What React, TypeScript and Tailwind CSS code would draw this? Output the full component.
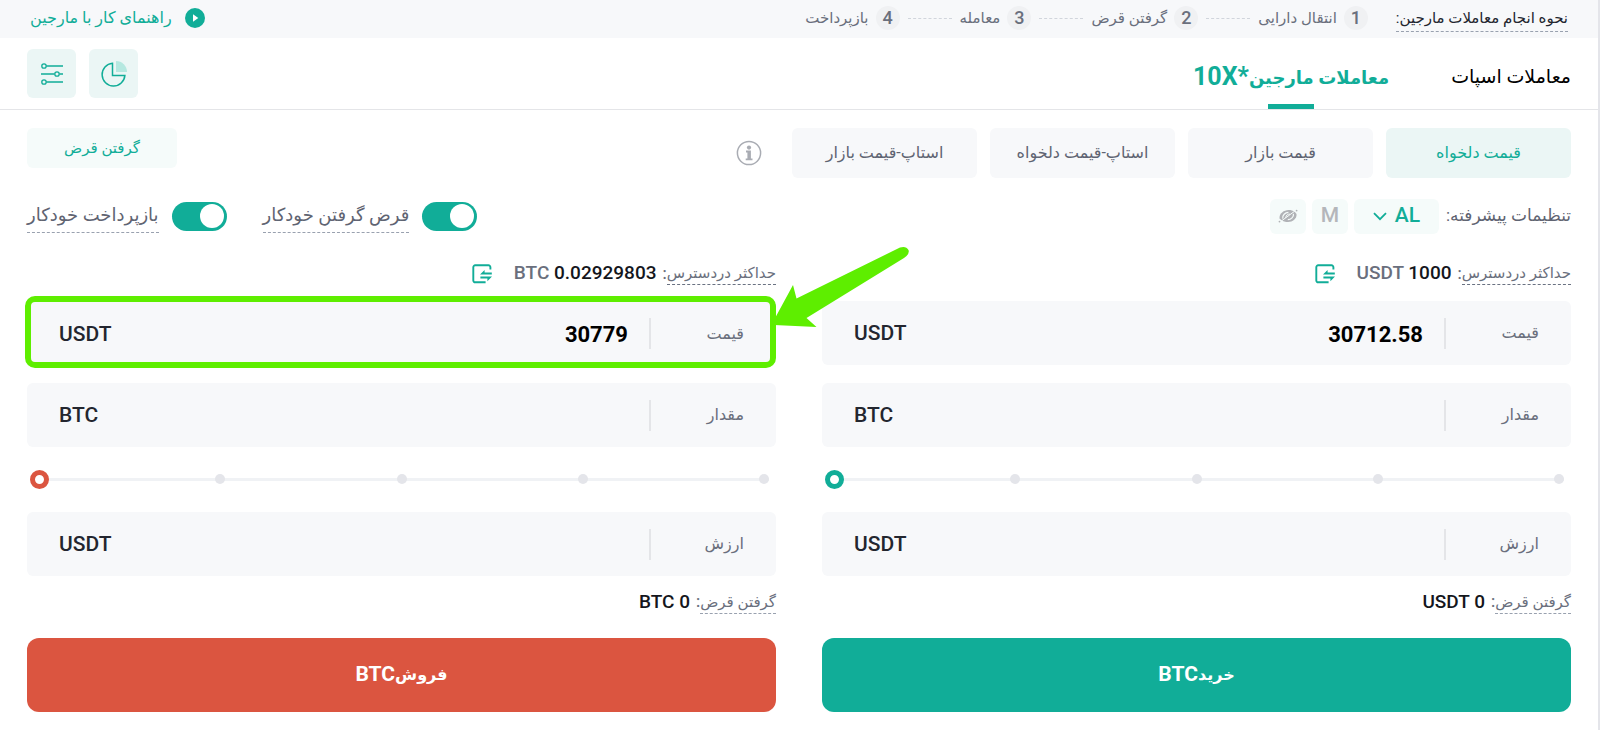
import { Fragment, useId, useState } from "react";
import clsx from "clsx";

const STEPS = ["انتقال دارایی", "گرفتن قرض", "معامله", "بازپرداخت"];
const ORDER_TYPES = ["قیمت دلخواه", "قیمت بازار", "استاپ-قیمت دلخواه", "استاپ-قیمت بازار"];

function PlayIcon() {
  return (
    <svg viewBox="0 0 20 20" className="size-5" aria-hidden="true">
      <circle cx="10" cy="10" r="10" fill="#11ad98" />
      <path d="M8 6.2v7.6l5.300-3.8z" fill="#fff" />
    </svg>
  );
}

function SlidersIcon() {
  return (
    <svg viewBox="0 0 24 24" className="size-6" fill="none" stroke="#11ad98" strokeWidth="1.3" aria-hidden="true">
      <path d="M6.3 4H23M1 12h13.5M19.5 12H23M6.3 20H23" />
      <circle cx="4" cy="4" r="2.2" />
      <circle cx="17" cy="12" r="2.2" />
      <circle cx="4" cy="20" r="2.2" />
    </svg>
  );
}

function PieIcon() {
  return (
    <svg viewBox="0 0 28 28" className="size-7" fill="none" aria-hidden="true">
      <path d="M12.500 3.200A11.400 11.400 0 1 0 24.900 15.400H12.500z" stroke="#11ad98" strokeWidth="1.5" />
      <path d="M16 1v11h11A11 11 0 0 0 16 1z" fill="#b5e8e0" />
    </svg>
  );
}

function TransferIcon() {
  return (
    <svg viewBox="0 0 20 20" className="size-5" fill="none" aria-hidden="true">
      <path
        d="M18.400 5.600V3.200A1.900 1.900 0 0 0 16.500 1.300H3.200A1.900 1.900 0 0 0 1.300 3.200V16.400A1.900 1.900 0 0 0 3.200 18.300H13.600"
        stroke="#11ad98"
        strokeWidth="1.9"
      />
      <path d="M19.800 8.500v2H8l4.600-4.400v2.400zM8.400 12.600h11.600l-4.600 4.600v-2.600H8.400z" fill="#11ad98" />
    </svg>
  );
}

function EyeOffIcon() {
  return (
    <svg viewBox="0 0 20 16" className="h-4 w-5" fill="none" aria-hidden="true">
      <path d="M1.500 10.500C1 5.500 6 2 10.500 2c2.500 0 4.500.6 6 1.600L18.500 6c.6 4.500-4 8-8.500 8-2.500 0-5-.6-6.500-1.800z" fill="#b0b2b6" />
      <path d="M4.800 10.600c-.6-3.400 2.400-6.200 5.600-6.200M15.400 5.800c.6 3.200-2.400 5.800-5.600 5.800" stroke="#f5fbfa" strokeWidth="1.2" />
      <path d="M7.600 9.900C8 7 10 5.800 12 6.200" stroke="#f5fbfa" strokeWidth="1" />
      <path d="M2.600 13.600 18 2.200" stroke="#f5fbfa" strokeWidth="1" />
      <circle cx="1.500" cy="13.600" r=".9" fill="#b0b2b6" />
      <circle cx="18.600" cy="2.600" r=".9" fill="#b0b2b6" />
    </svg>
  );
}

function InfoIcon() {
  return (
    <svg viewBox="0 0 26 26" className="size-[26px]" fill="none" aria-hidden="true">
      <circle cx="13" cy="13" r="11.6" stroke="#a9acb3" strokeWidth="1.5" />
      <circle cx="13" cy="7.600" r="2.1" fill="#a9acb3" />
      <path d="M10 10.600h4.900v7.800h1.600v1.800H9.700v-1.800h1.700v-6H10z" fill="#a9acb3" />
    </svg>
  );
}

function Switch({ label }: { label: string }) {
  const id = useId();
  return (
    <div className="flex items-center gap-[13px]">
      <input
        id={id}
        type="checkbox"
        role="switch"
        defaultChecked
        className="flex h-[29px] w-[55px] shrink-0 cursor-pointer appearance-none items-center justify-start rounded-full bg-gray-300 p-[3px] before:size-6 before:rounded-full before:bg-white checked:justify-end checked:bg-[#11ad98]"
        dir="ltr"
      />
      <label htmlFor={id} className="border-b border-dashed border-gray-400 pt-[2px] pb-[3px] text-lg leading-7 text-[#5f6472]">
        {label}
      </label>
    </div>
  );
}

type FieldProps = { label: string; unit: string; value?: string; marked?: boolean };

function Field({ label, unit, value = "", marked }: FieldProps) {
  const id = useId();
  const [text, setText] = useState(value);
  return (
    <div className={clsx("relative flex h-16 items-center rounded-md bg-[#f7f8fa] px-8", marked && "border-t border-[#11ad98]")}>
      <label htmlFor={id} className="w-[93px] text-base text-[#6a6f7d]">
        {label}
      </label>
      <span className="h-[31px] w-[2px] bg-[#e4e5e8]" />
      <input
        id={id}
        dir="ltr"
        value={text}
        onChange={(e) => setText(e.target.value)}
        className="mx-[21px] min-w-0 flex-1 bg-transparent pt-[2px] text-right text-[22px] font-bold text-black outline-none"
      />
      <span className="pt-[2px] text-[21px] font-medium text-[#23262f]">{unit}</span>
      {marked && (
        <>
          <span className="pointer-events-none absolute -top-[6px] right-0 -bottom-[3px] -left-[2px] rounded-[10px] border-[6px] border-[#5eee00]" />
          <svg
            viewBox="0 0 136 82"
            className="pointer-events-none absolute -top-[56px] left-full z-10 -ml-[3px] h-[82px] w-[136px]"
            fill="#5eee00"
            aria-hidden="true"
          >
            <path d="M1 74 20 39 23.500 52.500 127 1.500Q133-.5 135.500 4Q137 8 131 12L33.500 72 43.500 81 1 79Z" />
          </svg>
        </>
      )}
    </div>
  );
}

function AmountSlider({ tone, label }: { tone: "buy" | "sell"; label: string }) {
  return (
    <div dir="ltr" className="mx-[3px] grid h-[65px] items-center pb-px">
      <div className="col-start-1 row-start-1 mx-1 flex items-center">
        <span className="h-[3px] flex-1 bg-[#f0f2f5]" />
      </div>
      <div className="col-start-1 row-start-1 mx-1 flex justify-between">
        {[0, 25, 50, 75, 100].map((stop) => (
          <span key={stop} className="size-[10px] rounded-full bg-[#e4e5ea]" />
        ))}
      </div>
      <input
        type="range"
        min={0}
        max={100}
        defaultValue={0}
        aria-label={label}
        className={clsx(
          "z-10 col-start-1 row-start-1 h-5 w-full cursor-pointer appearance-none bg-transparent [&::-webkit-slider-thumb]:size-[19px] [&::-webkit-slider-thumb]:appearance-none [&::-webkit-slider-thumb]:rounded-full [&::-webkit-slider-thumb]:border-[5px] [&::-webkit-slider-thumb]:border-solid [&::-webkit-slider-thumb]:bg-white",
          tone === "buy"
            ? "[&::-webkit-slider-thumb]:border-[#11ad98]"
            : "[&::-webkit-slider-thumb]:border-[#db5540]",
        )}
      />
    </div>
  );
}

type SideProps = {
  tone: "buy" | "sell";
  action: string;
  available: string;
  availableUnit: string;
  price: string;
  loanUnit: string;
  marked?: boolean;
};

function OrderForm({ tone, action, available, availableUnit, price, loanUnit, marked }: SideProps) {
  return (
    <form className="min-w-0 flex-1" onSubmit={(e) => e.preventDefault()}>
      <div className="flex h-[52px] items-center pb-[3px] text-[19px] font-medium">
        <span className="border-b border-dashed border-gray-500 text-[15px] leading-[22px] font-normal text-[#6a6f7d]">
          حداکثر دردسترس
        </span>
        <span className="me-[6px] text-base text-[#6a6f7d]">:</span>
        <bdi dir="ltr" className="text-[#14161c]">
          <span className="text-[#6a6f7d]">{availableUnit}</span> {available}
        </bdi>
        <button type="button" aria-label="انتقال" className="ms-[22px] cursor-pointer">
          <TransferIcon />
        </button>
      </div>
      <div className="flex flex-col gap-[18px]">
        <Field label="قیمت" unit="USDT" value={price} marked={marked} />
        <Field label="مقدار" unit="BTC" />
      </div>
      <AmountSlider tone={tone} label={action} />
      <Field label="ارزش" unit="USDT" />
      <div className="flex h-[62px] items-center pb-[10px] text-[19px] font-medium">
        <span className="border-b border-dashed border-gray-400 text-[15px] leading-[22px] font-normal text-[#6a6f7d]">
          گرفتن قرض
        </span>
        <span className="me-[6px] text-base text-[#6a6f7d]">:</span>
        <bdi dir="ltr" className="text-[#14161c]">
          {loanUnit} 0
        </bdi>
      </div>
      <button
        type="submit"
        className={clsx(
          "flex h-[74px] w-full cursor-pointer items-center justify-center rounded-xl font-bold text-white",
          tone === "buy" ? "bg-[#11ad98]" : "bg-[#db5540]",
        )}
      >
        <span className="text-base">{action}</span>
        <span className="text-[21px]">BTC</span>
      </button>
    </form>
  );
}

export default function App() {
  const [type, setType] = useState(0);
  return (
    <div
      dir="rtl"
      className="flex min-h-screen flex-col bg-white font-['Roboto','DejaVu_Sans',sans-serif] font-normal"
    >
      <div className="w-full flex-1 border-r-2 border-[#e4e5ea]">
        <div className="flex h-[38px] items-center bg-[#f7f8fa] px-[30px] pb-[2px] text-[15px] text-[#6a6f7d]">
          <span className="me-[28px] border-b border-dashed border-gray-400 leading-[26px] text-[#23262f]">
            نحوه انجام معاملات مارجین:
          </span>
          <ol className="flex items-center">
            {STEPS.map((step, i) => (
              <Fragment key={step}>
                {i > 0 && <li aria-hidden="true" className="mx-2 w-11 border-t border-dashed border-gray-300" />}
                <li className="flex items-center gap-[7px]">
                  <span className="flex size-6 items-center justify-center rounded-full bg-[#f0f1f3] text-lg font-medium">{i + 1}</span>
                  {step}
                </li>
              </Fragment>
            ))}
          </ol>
          <a href="#guide" className="ms-auto flex items-center gap-[13px] text-base text-[#11ad98]">
            <PlayIcon />
            راهنمای کار با مارجین
          </a>
        </div>

        <header className="flex h-[72px] items-stretch border-b border-[#e4e5e8] px-[27px]">
          <nav className="flex gap-[62px]">
            <a href="#spot" className="flex items-center pt-2 text-[19px] text-black">
              معاملات اسپات
            </a>
            <a href="#margin" className="relative flex items-center pt-2 text-lg font-bold text-[#11ad98]">
              <span>معاملات مارجین</span>
              <bdi dir="ltr" className="text-[25px]">10X*</bdi>
              <span className="absolute inset-x-0 bottom-0 mx-auto h-[5px] w-[46px] bg-[#11ad98]" />
            </a>
          </nav>
          <div className="ms-auto flex items-center gap-[13px]">
            <button type="button" aria-label="نمودار" className="flex size-[49px] cursor-pointer items-center justify-center rounded-md bg-[#ebf6f5]">
              <PieIcon />
            </button>
            <button type="button" aria-label="تنظیمات" className="flex size-[49px] cursor-pointer items-center justify-center rounded-md bg-[#ebf6f5]">
              <SlidersIcon />
            </button>
          </div>
        </header>

        <main className="px-[27px] pt-[18px] pb-4">
          <div className="flex items-start">
            <div className="flex items-center gap-[13px]">
              {ORDER_TYPES.map((name, i) => (
                <button
                  key={name}
                  type="button"
                  onClick={() => setType(i)}
                  className={clsx(
                    "h-[50px] w-[185px] cursor-pointer rounded-md text-base",
                    i === type ? "bg-[#ebf6f5] text-[#11ad98]" : "bg-[#f7f8fa] text-[#5f6472]",
                  )}
                >
                  {name}
                </button>
              ))}
              <button type="button" aria-label="راهنما" className="ms-[17px] cursor-pointer">
                <InfoIcon />
              </button>
            </div>
            <button type="button" className="ms-auto h-10 w-[150px] cursor-pointer rounded-md bg-[#f5fbfa] text-[15px] text-[#11ad98]">
              گرفتن قرض
            </button>
          </div>

          <div className="mt-[18px] flex h-10 items-center justify-between">
            <div className="flex items-center gap-[6px]">
              <span className="me-px text-[17px] text-[#5f6472]">تنظیمات پیشرفته:</span>
              <button type="button" className="flex h-[35px] w-[85px] cursor-pointer items-center justify-center gap-2 rounded-md bg-[#f5fbfa] text-[21px] font-medium text-[#11ad98]">
                AL
                <svg viewBox="0 0 14 9" className="h-[9px] w-[14px]" fill="none" stroke="#11ad98" strokeWidth="1.8" aria-hidden="true">
                  <path d="M1 1.200 7 7.200l6-6" />
                </svg>
              </button>
              <button type="button" className="h-[35px] w-9 cursor-pointer rounded-md bg-[#f5fbfa] text-[21px] font-medium text-[#b4b6ba]">
                M
              </button>
              <button type="button" aria-label="پنهان کردن" className="flex h-[35px] w-9 cursor-pointer items-center justify-center rounded-md bg-[#f5fbfa]">
                <EyeOffIcon />
              </button>
            </div>
            <div className="flex items-center gap-9">
              <Switch label="قرض گرفتن خودکار" />
              <Switch label="بازپرداخت خودکار" />
            </div>
          </div>

          <div className="mt-[13px] flex gap-[46px]">
            <OrderForm tone="buy" action="خرید" available="1000" availableUnit="USDT" price="30712.58" loanUnit="USDT" />
            <OrderForm tone="sell" action="فروش" available="0.02929803" availableUnit="BTC" price="30779" loanUnit="BTC" marked />
          </div>
        </main>
      </div>
    </div>
  );
}
